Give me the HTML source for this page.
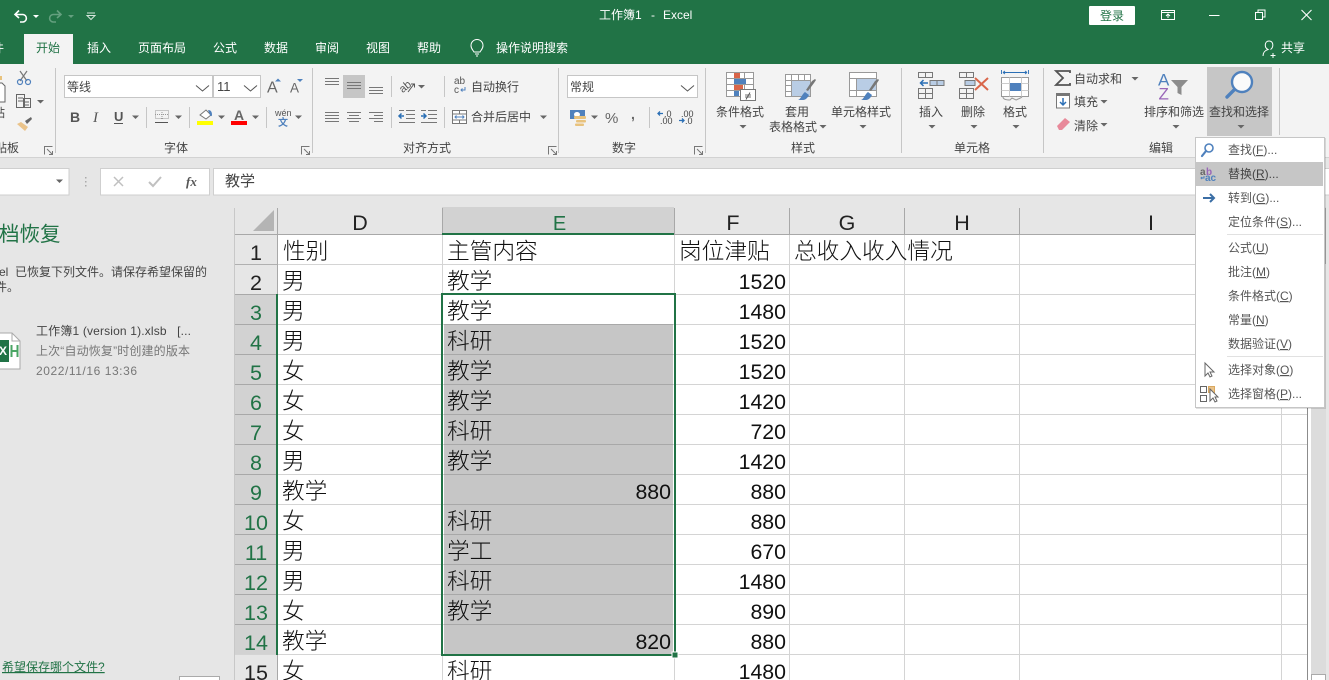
<!DOCTYPE html>
<html lang="zh-CN">
<head>
<meta charset="utf-8">
<title>工作簿1 - Excel</title>
<style>
html,body{margin:0;padding:0;width:1329px;height:680px;overflow:hidden;background:#fff}
svg{display:block;position:absolute;left:0;top:0}
text{font-family:"Liberation Sans","Noto Sans CJK SC",sans-serif;font-size:12px;fill:#444;white-space:pre}
.w text,text.w{fill:#fff}
.g text{fill:#444}
.c text{font-size:22.7px;fill:#111;font-weight:300}
.n text{font-size:21.3px;fill:#111;text-anchor:end;font-weight:400}
.h text{font-size:21.5px;fill:#222;text-anchor:middle}
.s text{font-size:21.5px;fill:#217346;text-anchor:middle}
.m text{fill:#555}
.ln{stroke:#d4d4d4;stroke-width:1;shape-rendering:crispEdges}
.dk{stroke:#a8a8a8;stroke-width:1;shape-rendering:crispEdges}
.cr{shape-rendering:crispEdges}
</style>
</head>
<body>
<svg width="1329" height="680" viewBox="0 0 1329 680" xmlns="http://www.w3.org/2000/svg">
<defs>
<path id="a" d="M-3.5 -1.5h7l-3.5 3.5z" fill="#666"/>
<path id="l" d="M.5 8.5V.5H8.5M3 3L8.5 8.5M8.5 5V8.5H5" fill="none" stroke="#777"/>
</defs>

<!-- title bar -->
<rect width="1329" height="64" fill="#217346"/>
<path d="M19 10.5L15 14.5L19 18M15.5 14.5H23a4 3.8 0 0 1 0 7.5H20" fill="none" stroke="#fff" stroke-width="1.6"/>
<path d="M33 15h6l-3 3z" fill="#fff"/>
<path d="M57 10.5L61 14.5L57 18M60.5 14.5H53a4 3.8 0 0 0 0 7.5H56" fill="none" stroke="#64a07f" stroke-width="1.6"/>
<path d="M68 15h6l-3 3z" fill="#64a07f"/>
<path d="M87 13h8M87 15.5h8l-4 4z" fill="none" stroke="#d5e6dc"/>
<g class="w">
<text x="599" y="19">工作簿1</text>
<text x="651" y="19">-</text>
<text x="663" y="19">Excel</text>
</g>
<rect x="1089" y="6" width="46" height="19" rx="1" fill="#fff"/>
<text x="1100" y="20" style="fill:#217346">登录</text>
<path d="M1161.5 10.5h13v9h-13zM1161.5 12.5h13M1168 18v-4M1166 16l2-2 2 2" fill="none" stroke="#fff"/>
<path d="M1209 15.5h10.500" stroke="#fff"/>
<path d="M1255.500 12.500h7v7h-7zM1258 12.500v-2.500h7v7h-2.500" fill="none" stroke="#fff"/>
<path d="M1301.500 10l10 10M1311.500 10l-10 10" stroke="#fff" stroke-width="1.1"/>

<!-- tabs -->
<rect x="24" y="34" width="49" height="30" fill="#f3f3f3"/>
<g class="w">
<text x="-8" y="52">件</text>
<text x="87" y="52">插入</text>
<text x="138" y="52">页面布局</text>
<text x="213" y="52">公式</text>
<text x="264" y="52">数据</text>
<text x="315" y="52">审阅</text>
<text x="366" y="52">视图</text>
<text x="417" y="52">帮助</text>
<text x="496" y="52">操作说明搜索</text>
<text x="1281" y="52">共享</text>
</g>
<text x="36" y="52" style="fill:#217346">开始</text>
<path d="M474 52c-1-2-3-3-3-6.500a6 6 0 0 1 12 0c0 3.500-2 4.500-3 6.500zM475 54h4M476 56h2" fill="none" stroke="#fff"/>
<path d="M1263 56c0-4 2-5.500 5-6.500c-4-2-3.500-8.500 1-8.500s5 6 1.500 8.500" fill="none" stroke="#fff"/>
<path d="M1273 53v5M1270.500 55.500h5" stroke="#fff"/>

<!-- ribbon -->
<rect y="64" width="1329" height="93" fill="#f3f3f3"/>
<rect y="157" width="1329" height="1" fill="#d2d2d2"/>
<rect y="158" width="1329" height="50" fill="#e6e6e6"/>
<g class="cr" stroke="#c6c6c6">
<path d="M55.500 68v85M312.500 68v85M558.500 68v85M705.500 68v85M901.500 68v85M1043.500 68v85M1279.500 68v67"/>
<path d="M146.500 107v21M189.500 107v21M266.500 107v21M391.500 76v21M391.500 107v21M444.500 76v21M444.500 107v21M649.500 107v21"/>
</g>

<!-- clipboard -->
<path d="M-2 76h4v4h-4z" fill="#e8c27d"/>
<path d="M-2 83h4l3 3v16h-7z" fill="#fff" stroke="#666"/>
<text x="-7" y="117">贴</text>
<path d="M20 71l7 10M27 71l-7 10" stroke="#777" stroke-width="1.200"/>
<circle cx="20" cy="82" r="2.500" fill="none" stroke="#4f81bd" stroke-width="1.200"/>
<circle cx="28" cy="82" r="2.500" fill="none" stroke="#4f81bd" stroke-width="1.200"/>
<path d="M16.500 94.500h8v13h-8zM23.500 98.500h7v9h-7zM18 98h5M18 101h5M25 102h4M25 105h4" fill="#f3f3f3" stroke="#666"/>
<use href="#a" x="40.500" y="101.500"/>
<path d="M17 124l8 7 3-4-7-5z" fill="#eac38a"/>
<path d="M25 121l6-4 1 2-5 5z" fill="#666"/>
<text x="-17" y="152">剪贴板</text>
<use href="#l" x="44" y="146"/>

<!-- font -->
<g class="cr" fill="#fff" stroke="#c6c6c6">
<rect x="64.500" y="75.500" width="148" height="22"/>
<rect x="213.500" y="75.500" width="47" height="22"/>
<rect x="567.500" y="75.500" width="130" height="22"/>
</g>
<text x="67" y="91">等线</text>
<text x="217" y="91" style="font-size:13px">11</text>
<path d="M196 85.500l6.500 5.500 6.500-5.500M244 85.500l6.500 5.500 6.500-5.500M681 85.500l6.500 5.500 6.500-5.500" fill="none" stroke="#555"/>
<text x="267" y="92.500" style="font-size:16px;fill:#666">A</text>
<path d="M275 81.500h6l-3-3z" fill="#4f81bd"/>
<text x="290" y="92.500" style="font-size:13.500px;fill:#666">A</text>
<path d="M297 79h6l-3 3z" fill="#4f81bd"/>
<text x="70" y="122" style="font-weight:bold;fill:#555;font-size:14px">B</text>
<text x="93" y="122" style="font-style:italic;font-family:'Liberation Serif',serif;font-size:15px;fill:#555">I</text>
<text x="114" y="121" style="font-weight:bold;fill:#555;font-size:13px">U</text>
<path d="M114 123.500h9" stroke="#555"/>
<use href="#a" x="135.500" y="117"/>
<path d="M155.500 110.500h13v8h-13zM162 110v9M155 114.500h14" fill="none" stroke="#999" stroke-dasharray="1 1"/>
<path d="M155 122.500h13" stroke="#555"/>
<use href="#a" x="178.500" y="117"/>
<path d="M200 115l6-5 5 5-5 4z" fill="#fff" stroke="#777"/>
<path d="M208 110c3 0 4 2 4 5 0 1-1 2-2 0z" fill="#4f81bd"/>
<rect x="197" y="121" width="16" height="4" fill="#ff0"/>
<use href="#a" x="221.500" y="117"/>
<text x="234" y="120" style="font-size:14px;font-weight:bold;fill:#666">A</text>
<rect x="231" y="121" width="16" height="4" fill="#f00"/>
<use href="#a" x="255.500" y="117"/>
<text x="275" y="116" style="font-size:9px;fill:#555">wén</text>
<text x="278" y="126" style="font-size:10px;fill:#4f81bd;font-weight:bold">文</text>
<use href="#a" x="298.500" y="117"/>
<text x="164" y="152">字体</text>
<use href="#l" x="301" y="146"/>

<!-- alignment -->
<rect x="343" y="75" width="22" height="23" fill="#c6c6c6"/>
<g stroke="#777" class="cr">
<path d="M325 78.500h14M325 81.500h14M325 84.500h14"/>
<path d="M347 82.500h14M347 85.500h14M347 88.500h14"/>
<path d="M369 87.500h14M369 90.500h14M369 93.500h14"/>
<path d="M325 112.500h14M325 115.500h14M325 118.500h14M325 121.500h14"/>
<path d="M347 112.500h14M349 115.500h10M347 118.500h14M349 121.500h10"/>
<path d="M369 112.500h14M374 115.500h9M369 118.500h14M374 121.500h9"/>
<path d="M406 110.500h9M406 114.500h9M406 118.500h9M399 122.500h16M399 110.500h5"/>
<path d="M428 110.500h9M428 114.500h9M428 118.500h9M421 122.500h16M421 110.500h5"/>
</g>
<path d="M404 116h-5M401.500 113.500l-2.500 2.500 2.500 2.500M421 116h5M423.500 113.500l2.500 2.500-2.500 2.500" fill="none" stroke="#2b6fb5" stroke-width="1.500"/>
<text x="399" y="91" transform="rotate(-40 404 87)" style="font-size:11px;fill:#555">ab</text>
<path d="M408 92l6-8M411 84h3.500v3.500" fill="none" stroke="#555"/>
<use href="#a" x="421.500" y="86.500"/>
<text x="403" y="152">对齐方式</text>
<use href="#l" x="548" y="146"/>
<text x="454" y="84" style="font-size:10px;fill:#555">ab</text>
<text x="454" y="93" style="font-size:10px;fill:#555">c</text>
<path d="M465 87v3h-4M462.500 88.500l-1.500 1.500 1.500 1.500" fill="none" stroke="#4f81bd"/>
<text x="471" y="91">自动换行</text>
<path d="M452.500 110.500h14v13h-14zM452.500 114h14M452.500 120h14M459.500 110.500v3M459.500 120v3.500" fill="#fff" stroke="#777"/>
<path d="M455 117h9M456.500 115.500l-1.500 1.500 1.500 1.500M462.500 115.500l1.500 1.500-1.500 1.500" fill="none" stroke="#4f81bd"/>
<text x="471" y="121">合并后居中</text>
<use href="#a" x="543.500" y="117"/>

<!-- number -->
<text x="570" y="91">常规</text>
<rect x="570" y="110" width="15" height="9" fill="#4f81bd"/>
<ellipse cx="577" cy="114.500" rx="3" ry="2.500" fill="#fff"/>
<rect x="574" y="116" width="12" height="3" rx="1" fill="#e8c27d"/>
<rect x="576" y="120" width="10" height="2.500" rx="1" fill="#e8c27d"/>
<rect x="575" y="123.500" width="9" height="2.500" rx="1" fill="#e8c27d"/>
<use href="#a" x="594.500" y="117"/>
<text x="605" y="123" style="font-size:15px;fill:#666">%</text>
<text x="631" y="119" style="font-size:14px;font-weight:bold;fill:#666">,</text>
<g>
<text x="664" y="117" style="font-size:9px">.0</text>
<text x="660" y="124" style="font-size:9px">.00</text>
<text x="681" y="117" style="font-size:9px">.00</text>
<text x="685" y="124" style="font-size:9px">.0</text>
</g>
<path d="M663 113.500h-5M660 111.500l-2 2 2 2M679 120.500h5M682 118.500l2 2-2 2" fill="none" stroke="#2b6fb5" stroke-width="1.300"/>
<text x="612" y="152">数字</text>
<use href="#l" x="694" y="146"/>

<!-- styles -->
<g class="cr">
<path d="M726.500 72.500h27v24h-27zM735.500 72.500v24M744.500 72.500v24M726.500 78.500h27M726.500 84.500h27M726.500 90.500h27" fill="#fff" stroke="#999"/>
<rect x="734" y="73" width="6" height="5" fill="#d9664a"/>
<rect x="734" y="79" width="12" height="5" fill="#4f81bd"/>
<rect x="734" y="85" width="9" height="5" fill="#d9664a"/>
<rect x="734" y="91" width="5" height="5" fill="#4f81bd"/>
<rect x="740.500" y="89.500" width="15" height="11" fill="#fff" stroke="#777"/>
</g>
<path d="M745 95h6M745 97h6M750 92.500l-4 7" stroke="#444" stroke-width=".8"/>
<g class="cr">
<path d="M785.500 74.500h25v22h-25zM791.500 74.500v22M798.500 74.500v22M804.500 74.500v22M785.500 80.500h25M785.500 85.500h25M785.500 91.500h25" fill="#fff" stroke="#999"/>
<rect x="792" y="81" width="18" height="15" fill="#b9cde5"/>
<path d="M849.500 72.500h27v24h-27z" fill="#fff" stroke="#999"/>
<path d="M849.500 78.500h27M856.500 78.500v18M849.500 90.500h27" fill="none" stroke="#999"/>
<rect x="857" y="79" width="19" height="11" fill="#b9cde5"/>
</g>
<path d="M806 90l6-9 3-2 1 1-2 3-6 8z" fill="#777"/>
<path d="M798 100c3-1 4-6 7-8l4 3c-1 2-3 5-6 5z" fill="#4f81bd"/>
<path d="M869 90l6-9 3-2 1 1-2 3-6 8z" fill="#777"/>
<path d="M861 100c3-1 4-6 7-8l4 3c-1 2-3 5-6 5z" fill="#4f81bd"/>
<text x="716" y="116">条件格式</text>
<use href="#a" x="743" y="126.500"/>
<text x="785" y="116">套用</text>
<text x="769" y="131">表格格式</text>
<use href="#a" x="823" y="126.500"/>
<text x="831" y="116">单元格样式</text>
<use href="#a" x="863" y="126.500"/>
<text x="791" y="152">样式</text>

<!-- cells -->
<g class="cr" fill="none" stroke="#777">
<path d="M918.500 72.500h14v5h-14zM925.500 72.500v5M918.500 88.500h14v10h-14zM925.500 88.500v10M918.500 93.500h14"/>
<path d="M959.500 72.500h14v5h-14zM966.500 72.500v5M959.500 88.500h14v10h-14zM966.500 88.500v10M959.500 93.500h14"/>
</g>
<rect x="930" y="80.500" width="14" height="5" fill="#b9cde5" stroke="#777"/>
<path d="M937 80.500v5" stroke="#777"/>
<path d="M928 83h-7M923.500 80l-3 3 3 3" fill="none" stroke="#2b6fb5" stroke-width="1.500"/>
<rect x="965" y="80.500" width="10" height="5" fill="#b9cde5" stroke="#777"/>
<path d="M975 78l13 12M988 78l-13 12" stroke="#d9664a" stroke-width="2"/>
<path d="M1001.500 70v4M1028.500 70v4M1003 72.500h24M1003 72.500l2-1.500M1003 72.500l2 1.500M1027 72.500l-2-1.500M1027 72.500l-2 1.500" fill="none" stroke="#2b6fb5" stroke-width=".9"/>
<path d="M1001.500 77.500h27v19h-27z" fill="#fff" stroke="#999" class="cr"/>
<path d="M1009.500 77.500v19M1021.500 77.500v19M1001.500 83.500h27M1001.500 90.500h27" stroke="#ccc" class="cr"/>
<rect x="1010" y="83" width="11" height="8" fill="#4f81bd"/>
<path d="M1003 97c0 3 6 3 7 3l2-2 4 2c2-1 5-2 6-3" fill="none" stroke="#999"/>
<text x="919" y="116">插入</text>
<use href="#a" x="932" y="126.500"/>
<text x="961" y="116">删除</text>
<use href="#a" x="974" y="126.500"/>
<text x="1003" y="116">格式</text>
<use href="#a" x="1016" y="126.500"/>
<text x="954" y="152">单元格</text>

<!-- editing -->
<path d="M1070 73v-2h-14l7 7-7 7h14v-2" fill="none" stroke="#555" stroke-width="1.800"/>
<text x="1074" y="83">自动求和</text>
<use href="#a" x="1135" y="78.500"/>
<rect x="1056.500" y="94" width="13" height="14" fill="#fff" stroke="#777"/>
<rect x="1056" y="93" width="14" height="3" fill="#777"/>
<path d="M1063 98v7M1060 102l3 3 3-3" fill="none" stroke="#2b6fb5" stroke-width="1.500"/>
<text x="1074" y="106">填充</text>
<use href="#a" x="1104" y="101.500"/>
<path d="M1057 126l8-8 5 4-8 8h-3z" fill="#e8899a"/>
<text x="1074" y="130">清除</text>
<use href="#a" x="1104" y="124.500"/>
<text x="1158" y="85.500" style="font-size:17px;fill:#4f81bd">A</text>
<text x="1158.500" y="99.500" style="font-size:17px;fill:#9966b8">Z</text>
<path d="M1171 80h17l-6.500 7v8l-4-2v-6z" fill="#8c8c8c"/>
<text x="1144" y="116">排序和筛选</text>
<use href="#a" x="1176" y="126.500"/>
<text x="1149" y="152">编辑</text>

<rect x="1207" y="67" width="65" height="69" fill="#c6c6c6"/>
<circle cx="1242" cy="82" r="10" fill="#fff" fill-opacity=".9" stroke="#4f81bd" stroke-width="2.400"/>
<path d="M1234 90l-7 7" stroke="#4f81bd" stroke-width="3.400" stroke-linecap="round"/>
<text x="1209" y="116">查找和选择</text>
<use href="#a" x="1241" y="126.500"/>

<!-- formula bar -->
<g class="cr" fill="#fff" stroke="#cfcfcf">
<rect x="-2" y="168.500" width="71" height="26.500"/>
<rect x="100.500" y="168.500" width="109" height="26.500"/>
<rect x="213.500" y="168.500" width="1120" height="26.500"/>
</g>
<use href="#a" x="59.500" y="181" />
<path d="M85 177h1.500v1.500H85zM85 181h1.500v1.500H85zM85 185h1.500v1.500H85z" fill="#aaa"/>
<path d="M114 177l9 9M123 177l-9 9" stroke="#c0c0c0" stroke-width="1.500"/>
<path d="M149 182l4 4 8-9" fill="none" stroke="#c0c0c0" stroke-width="2"/>
<text x="186" y="186" style="font-family:'Liberation Serif',serif;font-style:italic;font-weight:bold;font-size:13px;fill:#555">fx</text>
<text x="225" y="186" style="font-size:15px">教学</text>

<!-- left pane -->
<rect y="207" width="234" height="473" fill="#e6e6e6"/>
<text x="-1" y="241" style="font-size:20.500px;fill:#217346">档恢复</text>
<text x="-1" y="276">el</text>
<text x="15" y="276">已恢复下列文件。请保存希望保留的</text>
<text x="-5" y="291">件。</text>
<path d="M-1 333h13l8 8v28h-21z" fill="#fff" stroke="#aaa"/>
<path d="M12 333v8h8" fill="none" stroke="#aaa"/>
<rect x="-2" y="340" width="11" height="22" fill="#217346"/>
<text x="-1" y="355" style="font-size:12px;font-weight:bold;fill:#fff">X</text>
<path d="M11.500 345v12M17.500 345v12M11.500 351h6" stroke="#4aa564" stroke-width="2"/>
<text x="36" y="335" textLength="155" lengthAdjust="spacing">工作簿1 (version 1).xlsb   [...</text>
<text x="36" y="355" style="fill:#777" textLength="154" lengthAdjust="spacing">上次“自动恢复”时创建的版本</text>
<text x="36" y="375" style="fill:#777" textLength="101" lengthAdjust="spacing">2022/11/16 13:36</text>
<text x="2" y="671" text-decoration="underline" style="fill:#217346">希望保存哪个文件?</text>
<rect x="179.500" y="676.500" width="40" height="10" fill="#fff" stroke="#aaa"/>

<!-- grid base -->
<rect x="235" y="207" width="1072" height="473" fill="#fff"/>
<rect x="235" y="207" width="1072" height="27" fill="#e6e6e6"/>
<rect x="235" y="234" width="42" height="446" fill="#e6e6e6"/>
<rect x="442" y="207" width="232" height="27" fill="#d2d2d2"/>
<rect x="235" y="294" width="42" height="361" fill="#d2d2d2"/>
<path d="M253 231L274 231L274 210z" fill="#b4b4b4"/>
<path d="M234.500 208V680" stroke="#c8c8c8" class="cr"/>

<g class="ln">
<path d="M277 264.500H1307M277 294.500H1307M277 324.500H1307M277 354.500H1307M277 384.500H1307M277 414.500H1307M277 444.500H1307M277 474.500H1307M277 504.500H1307M277 534.500H1307M277 564.500H1307M277 594.500H1307M277 624.500H1307M277 654.500H1307"/>
<path d="M442.500 235V680M674.500 235V680M789.500 235V680M904.500 235V680M1019.500 235V680M1281.500 235V680"/>
<path d="M235 264.500h42M235 654.500h42"/>
</g>
<g class="dk">
<path d="M235 294.500h42M235 324.500h42M235 354.500h42M235 384.500h42M235 414.500h42M235 444.500h42M235 474.500h42M235 504.500h42M235 534.500h42M235 564.500h42M235 594.500h42M235 624.500h42"/>
<path d="M277.500 208V294M277.500 654V680"/>
<path d="M442.500 208V234M674.500 208V234M789.500 208V234M904.500 208V234M1019.500 208V234"/>
<path d="M235 234.500H1307"/>
</g>
<path d="M235 264.500h42" stroke="#b0b0b0" class="cr"/>

<!-- selection -->
<rect x="444" y="325" width="229" height="329" fill="#c6c6c6"/>
<g class="dk">
<path d="M444 324.500h229M444 354.500h229M444 384.500h229M444 414.500h229M444 444.500h229M444 474.500h229M444 504.500h229M444 534.500h229M444 564.500h229M444 594.500h229M444 624.500h229"/>
</g>
<rect x="442" y="233" width="232" height="2" fill="#217346" class="cr"/>
<rect x="276" y="294" width="2" height="361" fill="#217346" class="cr"/>
<rect x="442" y="294" width="233" height="361" fill="none" stroke="#217346" stroke-width="2" class="cr"/>
<rect x="672" y="652" width="6" height="6" fill="#217346" stroke="#fff" class="cr"/>

<!-- col headers -->
<g class="h">
<text x="360" y="230">D</text>
<text x="733" y="230">F</text>
<text x="847" y="230">G</text>
<text x="962" y="230">H</text>
<text x="1151" y="230">I</text>
<text x="256" y="260">1</text>
<text x="256" y="290">2</text>
<text x="256" y="680">15</text>
</g>
<g class="s">
<text x="559.500" y="230" style="font-size:20px">E</text>
<text x="256" y="320">3</text>
<text x="256" y="350">4</text>
<text x="256" y="380">5</text>
<text x="256" y="410">6</text>
<text x="256" y="440">7</text>
<text x="256" y="470">8</text>
<text x="256" y="500">9</text>
<text x="256" y="530">10</text>
<text x="256" y="560">11</text>
<text x="256" y="590">12</text>
<text x="256" y="620">13</text>
<text x="256" y="650">14</text>
</g>

<!-- cell text -->
<g class="c">
<text x="283" y="259">性别</text><text x="447" y="259">主管内容</text><text x="679" y="259">岗位津贴</text><text x="794" y="259">总收入收入情况</text>
<text x="282" y="289">男</text><text x="447" y="289">教学</text>
<text x="282" y="319">男</text><text x="447" y="319">教学</text>
<text x="282" y="349">男</text><text x="447" y="349">科研</text>
<text x="282" y="379">女</text><text x="447" y="379">教学</text>
<text x="282" y="409">女</text><text x="447" y="409">教学</text>
<text x="282" y="439">女</text><text x="447" y="439">科研</text>
<text x="282" y="469">男</text><text x="447" y="469">教学</text>
<text x="282" y="499">教学</text>
<text x="282" y="529">女</text><text x="447" y="529">科研</text>
<text x="282" y="559">男</text><text x="447" y="559">学工</text>
<text x="282" y="589">男</text><text x="447" y="589">科研</text>
<text x="282" y="619">女</text><text x="447" y="619">教学</text>
<text x="282" y="649">教学</text>
<text x="282" y="679">女</text><text x="447" y="679">科研</text>
</g>
<g class="n">
<text x="671" y="499">880</text>
<text x="671" y="649">820</text>
<text x="786" y="289">1520</text>
<text x="786" y="319">1480</text>
<text x="786" y="349">1520</text>
<text x="786" y="379">1520</text>
<text x="786" y="409">1420</text>
<text x="786" y="439">720</text>
<text x="786" y="469">1420</text>
<text x="786" y="499">880</text>
<text x="786" y="529">880</text>
<text x="786" y="559">670</text>
<text x="786" y="589">1480</text>
<text x="786" y="619">890</text>
<text x="786" y="649">880</text>
<text x="786" y="679">1480</text>
</g>

<!-- scrollbar -->
<rect x="1307" y="207" width="22" height="473" fill="#e6e6e6"/>
<rect x="1308" y="207" width="3" height="473" fill="#fff"/>
<rect x="1311" y="207" width="15" height="473" fill="#dcdcdc"/>
<path d="M1307.500 207V680" stroke="#8c8c8c" class="cr"/>
<rect x="1311.500" y="208.500" width="14" height="55" fill="#fff" stroke="#aaa" class="cr"/>
<rect x="1311.500" y="674.500" width="14" height="10" fill="#fff" stroke="#aaa" class="cr"/>

<!-- dropdown menu -->
<rect x="1196" y="138" width="130" height="271" fill="#000" opacity=".12"/>
<rect x="1195.500" y="137.500" width="129" height="270" fill="#fff" stroke="#c6c6c6" class="cr"/>
<rect x="1196" y="162" width="127" height="24" fill="#c6c6c6"/>
<path d="M1227 234.500h96M1196 234.500h0M1227 356.500h96" stroke="#e1e1e1" class="cr"/>
<circle cx="1209" cy="148" r="4" fill="none" stroke="#4f81bd" stroke-width="1.600"/>
<path d="M1206 151l-4 5" stroke="#4f81bd" stroke-width="2.200" stroke-linecap="round"/>
<text x="1200" y="175" style="font-size:10px;font-weight:bold;fill:#666">a</text>
<text x="1206" y="175" style="font-size:10px;font-weight:bold;fill:#9966b8">b</text>
<text x="1205" y="181" style="font-size:10px;font-weight:bold;fill:#4f81bd">ac</text>
<path d="M1204 176v2h-3M1202 177l-1 1 1 1" fill="none" stroke="#4f81bd"/>
<path d="M1203 198h11M1210 194l4 4-4 4" fill="none" stroke="#3b6ea5" stroke-width="2"/>
<g class="m">
<text x="1228" y="154">查找(<tspan text-decoration="underline">F</tspan>)...</text>
<text x="1228" y="178" style="fill:#444">替换(<tspan text-decoration="underline">R</tspan>)...</text>
<text x="1228" y="202">转到(<tspan text-decoration="underline">G</tspan>)...</text>
<text x="1228" y="226">定位条件(<tspan text-decoration="underline">S</tspan>)...</text>
<text x="1228" y="252">公式(<tspan text-decoration="underline">U</tspan>)</text>
<text x="1228" y="276">批注(<tspan text-decoration="underline">M</tspan>)</text>
<text x="1228" y="300">条件格式(<tspan text-decoration="underline">C</tspan>)</text>
<text x="1228" y="324">常量(<tspan text-decoration="underline">N</tspan>)</text>
<text x="1228" y="348">数据验证(<tspan text-decoration="underline">V</tspan>)</text>
<text x="1228" y="374">选择对象(<tspan text-decoration="underline">O</tspan>)</text>
<text x="1228" y="398">选择窗格(<tspan text-decoration="underline">P</tspan>)...</text>
</g>
<path d="M1205 363v13l3-3 2 4 2-1-2-4h4z" fill="#fff" stroke="#666"/>
<path d="M1200.500 386.500h6v6h-6zM1200.500 395.500h6v6h-6z" fill="#fff" stroke="#666" class="cr"/>
<rect x="1208.500" y="386.500" width="6" height="6" fill="#eac38a" stroke="#d9a860" class="cr"/>
<path d="M1210 389v12l3-3 2 4 2-1-2-4h3z" fill="#fff" stroke="#666"/>
</svg>
</body>
</html>
